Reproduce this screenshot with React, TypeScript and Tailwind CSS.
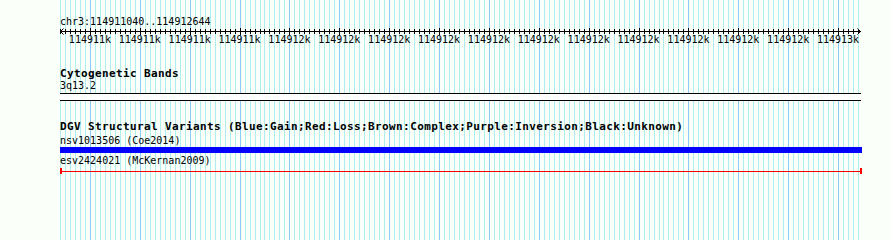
const START = 114911040;
const END = 114912644;
const LEFT = 60;
const SCALE = 800 / (END - START);

const ticks: { x: number; major: boolean }[] = [];
for (let bp = Math.ceil(START / 10) * 10; bp <= END; bp += 10) {
  ticks.push({ x: Math.round(LEFT + (bp - START) * SCALE), major: bp % 100 === 0 });
}

const labels = [
  "114911k", "114911k", "114911k", "114911k",
  "114912k", "114912k", "114912k", "114912k", "114912k", "114912k",
  "114912k", "114912k", "114912k", "114912k", "114912k",
  "114913k",
];

function Grid() {
  return (
    <svg className="absolute left-0 top-0" width={890} height={240}>
      {ticks.map((t, i) => (
        <line
          key={i}
          x1={t.x + 0.5}
          x2={t.x + 0.5}
          y1={0}
          y2={240}
          stroke={t.major ? "#87cefa" : "#afeeee"}
          strokeWidth={1}
        />
      ))}
    </svg>
  );
}

function Ruler() {
  return (
    <svg className="block overflow-visible" width={802} height={6}>
      <line x1={0} x2={801} y1={3.5} y2={3.5} stroke="#000" strokeWidth={1} />
      {ticks.map((t, i) => (
        <line
          key={i}
          x1={t.x - LEFT + 0.5}
          x2={t.x - LEFT + 0.5}
          y1={t.major ? 0 : 1}
          y2={t.major ? 7 : 6}
          stroke="#000"
          strokeWidth={1}
        />
      ))}
      <path d="M3.5 0.5 L0.5 3.5 L3.5 6.5" fill="none" stroke="#000" strokeWidth={1} />
      <path d="M797.5 0.5 L800.5 3.5 L797.5 6.5" fill="none" stroke="#000" strokeWidth={1} />
    </svg>
  );
}

export default function App() {
  return (
    <div className="relative h-[240px] w-[890px] overflow-hidden bg-[#fafffa] font-['DejaVu_Sans_Mono',monospace] text-black">
      <Grid />
      <div className="relative flex flex-col pl-[60px] pt-[16px]">
        <div className="text-[10px] leading-[12px]">chr3:114911040..114912644</div>
        <Ruler />
        <div className="flex pl-[5px] text-[10px] leading-[12px]">
          {labels.map((l, i) => (
            <div key={i} className="w-[49.875px] shrink-0 text-center whitespace-nowrap">
              {l}
            </div>
          ))}
        </div>

        <div className="mt-[22px] text-[11px] font-bold leading-[12px] tracking-[0.38px]">
          Cytogenetic Bands
        </div>
        <div className="text-[10px] leading-[12px]">3q13.2</div>
        <div className="mt-[1px] h-[8px] w-[801px] border-y border-black bg-white" />

        <div className="mt-[20px] text-[11px] font-bold leading-[12px] tracking-[0.38px] whitespace-nowrap">
          DGV Structural Variants (Blue:Gain;Red:Loss;Brown:Complex;Purple:Inversion;Black:Unknown)
        </div>
        <div className="mt-[2px] text-[10px] leading-[12px]">nsv1013506 (Coe2014)</div>
        <div className="h-[6px] w-[802px] bg-[#0000ff]" />
        <div className="mt-[2px] text-[10px] leading-[12px]">esv2424021 (McKernan2009)</div>
        <div className="mt-[1px] flex h-[6px] w-[802px] items-center">
          <div className="h-[6px] w-[2px] bg-[#ff0000]" />
          <div className="h-px flex-1 bg-[#ff0000]" />
          <div className="h-[6px] w-[2px] bg-[#ff0000]" />
        </div>
      </div>
    </div>
  );
}
